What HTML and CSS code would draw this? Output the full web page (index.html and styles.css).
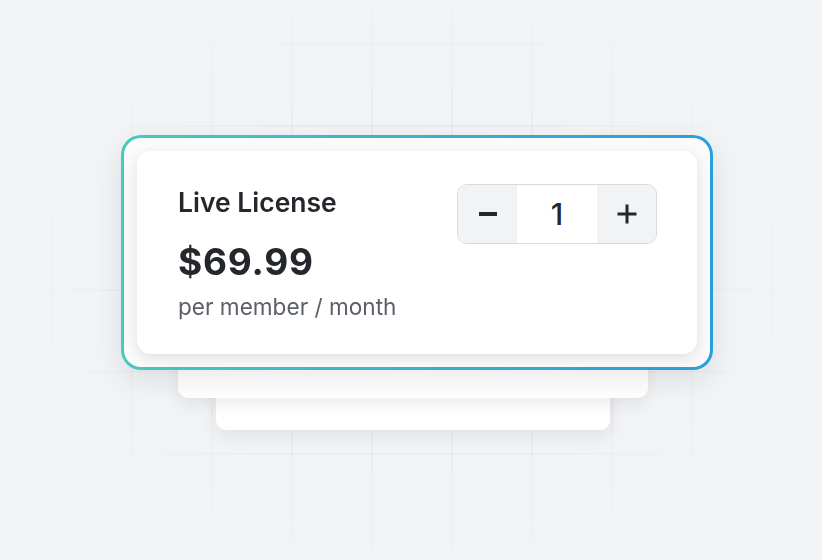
FILE: index.html
```html
<!DOCTYPE html>
<html lang="en">
<head>
<meta charset="utf-8">
<title>Live License</title>
<link rel="stylesheet" href="styles.css">
</head>
<body>
<div class="grid"></div>
<main class="stack">
  <section class="frame">
    <div class="card">
      <div class="info">
        <h1 class="title">Live License</h1>
        <p class="price">$69.99</p>
        <p class="period">per member / month</p>
      </div>
      <div class="stepper">
        <button class="step" aria-label="Decrease">
          <svg width="20" height="20" viewBox="0 0 20 20"><path d="M1 10h18" stroke="#24272c" stroke-width="4" stroke-linecap="butt"/></svg>
        </button>
        <span class="qty">1</span>
        <button class="step" aria-label="Increase">
          <svg width="20" height="20" viewBox="0 0 20 20"><path d="M0.5 10h19M10 0.5v19" stroke="#24272c" stroke-width="3" stroke-linecap="butt"/></svg>
        </button>
      </div>
    </div>
  </section>
  <div class="sheet sheet-2"></div>
  <div class="sheet sheet-3"></div>
</main>
</body>
</html>
```

FILE: styles.css
```css
* { box-sizing: border-box; }

html, body {
  margin: 0;
  height: 560px;
  background: #f2f3f5;
  font-family: Inter, "Noto Sans", sans-serif;
  color: #24272c;
  overflow: hidden;
}

body {
  display: flex;
  justify-content: center;
  align-items: center;
}

.grid {
  position: fixed;
  inset: 0;
  background-image:
    linear-gradient(90deg, rgba(0,0,0,0.03) 0 2px, transparent 2px),
    linear-gradient(180deg, rgba(0,0,0,0.03) 0 2px, transparent 2px);
  background-size: 80px 82px;
  background-position: 51px 43px;
  -webkit-mask-image: radial-gradient(ellipse 50% 55% at 50% 50%, #000 45%, transparent 100%);
  mask-image: radial-gradient(ellipse 50% 55% at 50% 50%, #000 45%, transparent 100%);
  pointer-events: none;
}

.stack {
  position: relative;
  display: flex;
  flex-direction: column;
  align-items: center;
  margin: 5px 0 0 4px;
}

.frame {
  position: relative;
  z-index: 3;
  width: 592px;
  height: 235px;
  margin-left: 8px;
  padding: 13px;
  border: 3px solid transparent;
  border-radius: 20px;
  background:
    linear-gradient(#fbfbfc, #fbfbfc) padding-box,
    linear-gradient(90deg, #47cabb 0%, #3bb5c9 45%, #2a9edd 100%) border-box;
  box-shadow: 0 10px 28px rgba(20, 24, 32, 0.09);
}

.card {
  height: 100%;
  display: flex;
  justify-content: space-between;
  align-items: flex-start;
  padding: 33px 40px 0 41px;
  background: #fff;
  border-radius: 14px;
  box-shadow: 0 4px 14px rgba(20, 24, 32, 0.12);
}

.info { display: flex; flex-direction: column; }

.title {
  margin: 1px 0 0;
  font-size: 26.5px;
  line-height: 34px;
  font-weight: 600;
  letter-spacing: 0;
}

.price {
  margin: 23px 0 0;
  font-size: 37px;
  line-height: 40px;
  font-weight: 700;
  letter-spacing: 0.8px;
}

.period {
  margin: 11px 0 0;
  font-size: 22.6px;
  line-height: 28px;
  font-weight: 400;
  color: #5b5f67;
}

.stepper {
  display: flex;
  width: 200px;
  height: 60px;
  border: 1px solid #d9dadd;
  border-radius: 10px;
  overflow: hidden;
}

.step {
  width: 59px;
  border: 0;
  padding: 0;
  background: #f2f3f5;
  display: flex;
  align-items: center;
  justify-content: center;
}

.qty {
  flex: 1;
  background: #fff;
  display: flex;
  align-items: center;
  justify-content: center;
  font-size: 30px;
  font-weight: 500;
  color: #24272c;
}

.sheet {
  position: relative;
  height: 60px;
  background: #fff;
  border-radius: 10px;
  box-shadow: 0 6px 18px rgba(20, 24, 32, 0.08);
}

.sheet-2 {
  z-index: 2;
  width: 470px;
  margin-top: -32px;
}

.sheet-3 {
  z-index: 1;
  width: 394px;
  margin-top: -28px;
}
```
